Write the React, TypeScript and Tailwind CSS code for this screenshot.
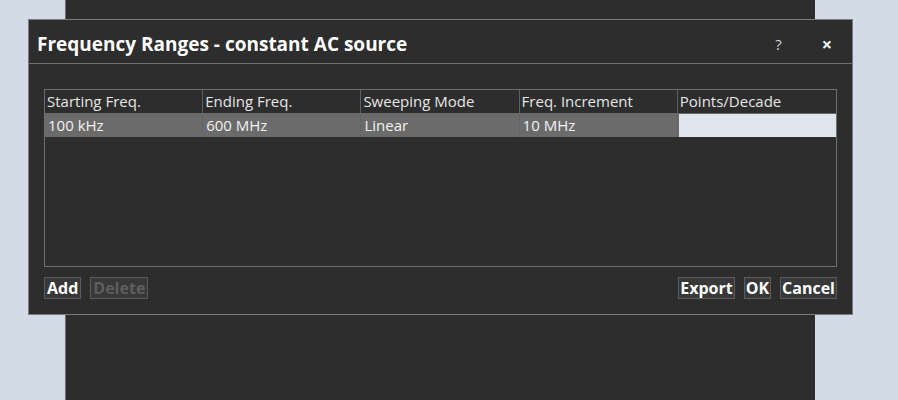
import React from "react";

const font = { fontFamily: '"Open Sans", "Noto Sans", sans-serif' };

function Btn({ children, disabled, wide }: { children: React.ReactNode; disabled?: boolean; wide?: boolean }) {
  return (
    <div
      className={
        "h-[22px] flex items-center border border-[#5c5c5c] bg-[#383838] text-[16px] font-bold leading-none " +
        (wide ? "px-[2px] " : "px-[1px] ") +
        (disabled ? "text-[#5e5e5e]" : "text-white")
      }
    >
      {children}
    </div>
  );
}

export default function App() {
  const headers = ["Starting Freq.", "Ending Freq.", "Sweeping Mode", "Freq. Increment", "Points/Decade"];
  const row = ["100 kHz", "600 MHz", "Linear", "10 MHz"];
  return (
    <div className="relative w-[898px] h-[400px] bg-[#d3dce6] overflow-hidden" style={font}>
      <div className="absolute left-[65px] top-0 w-[750px] h-[400px] bg-[#2d2d2d] border-l border-[#6f6f6f]" />
      <div className="absolute left-[28px] top-[19px] w-[825px] h-[296px] bg-[#2d2d2d] border border-[#7b7b7b] flex flex-col">
        <div className="h-[44px] flex items-center border-b border-[#6e6e6e] pl-[8px] pr-[20px] pt-[5px]">
          <div className="text-[19px] font-bold text-white">Frequency Ranges - constant AC source</div>
          <div className="ml-auto flex items-center gap-[40px]">
            <span className="text-[15px] text-[#d0d0d0]">?</span>
            <span className="text-[18px] font-bold text-white leading-none">×</span>
          </div>
        </div>
        <div className="flex-1 flex flex-col px-[15px] pt-[25px] pb-[15px]">
          <div className="h-[178px] border border-[#6e6e6e] flex flex-col">
            <div className="grid grid-cols-5 h-[24px] border-b border-[#6a6a6a]">
              {headers.map((h, i) => (
                <div
                  key={h}
                  className={
                    "text-[15px] text-[#e6e6e6] pl-[2px] leading-[23px] " + (i < 4 ? "border-r border-[#5f5f5f]" : "")
                  }
                >
                  {h}
                </div>
              ))}
            </div>
            <div className="grid grid-cols-5 h-[23px] bg-[#6b6b6b]">
              {row.map((c, i) => (
                <div key={i} className="text-[15px] text-[#f2f2f2] pl-[3px] leading-[23px] border-r border-[#646464]">
                  {c}
                </div>
              ))}
              <div className="bg-[#dee5ed] ml-[1px]" />
            </div>
          </div>
          <div className="mt-[10px] flex items-center">
            <Btn wide>Add</Btn>
            <div className="ml-[9px]">
              <Btn wide disabled>Delete</Btn>
            </div>
            <div className="ml-auto flex items-center gap-[9px]">
              <Btn>Export</Btn>
              <Btn>OK</Btn>
              <Btn>Cancel</Btn>
            </div>
          </div>
        </div>
      </div>
    </div>
  );
}
